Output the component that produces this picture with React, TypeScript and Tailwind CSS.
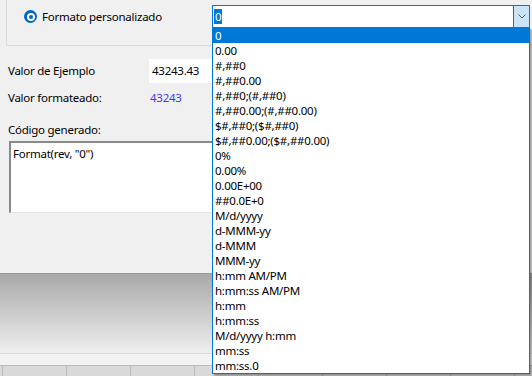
const FORMATS = [
  "0",
  "0.00",
  "#,##0",
  "#,##0.00",
  "#,##0;(#,##0)",
  "#,##0.00;(#,##0.00)",
  "$#,##0;($#,##0)",
  "$#,##0.00;($#,##0.00)",
  "0%",
  "0.00%",
  "0.00E+00",
  "##0.0E+0",
  "M/d/yyyy",
  "d-MMM-yy",
  "d-MMM",
  "MMM-yy",
  "h:mm AM/PM",
  "h:mm:ss AM/PM",
  "h:mm",
  "h:mm:ss",
  "M/d/yyyy h:mm",
  "mm:ss",
  "mm:ss.0",
];

const SELECTED = "0";

function Radio() {
  return (
    <span className="flex h-[13px] w-[13px] shrink-0 items-center justify-center rounded-full bg-[#0067c0]">
      <span className="flex h-[8px] w-[8px] items-center justify-center rounded-full bg-white">
        <span className="h-[4px] w-[4px] rounded-full bg-[#0067c0]" />
      </span>
    </span>
  );
}

function ComboBox() {
  return (
    <div className="flex h-[23px] w-[318px] border border-[#0078d7] bg-white">
      <div className="flex flex-1 items-center pl-[1px]">
        <span className="bg-[#0078d7] px-[1px] leading-[15px] text-white">{SELECTED}</span>
      </div>
      <div className="flex w-[16px] items-center justify-center border-l border-[#0078d7] bg-[#cce4f7]">
        <svg width="8" height="5" viewBox="0 0 8 5" fill="none">
          <path d="M0.5 0.5 L4 4 L7.5 0.5" stroke="#5a5a5a" strokeWidth="1" />
        </svg>
      </div>
    </div>
  );
}

function DropdownList() {
  return (
    <div className="absolute left-[212px] top-[27px] w-[318px] border border-[#0078d7] bg-white shadow-[2px_2px_2px_rgba(0,0,0,0.35)]">
      {FORMATS.map((f) => (
        <div
          key={f}
          className={
            f === SELECTED
              ? "h-[15px] overflow-hidden bg-[#0078d7] pl-[2px] leading-[15px] text-white"
              : "h-[15px] overflow-hidden pl-[2px] leading-[15px] text-black"
          }
        >
          {f}
        </div>
      ))}
    </div>
  );
}

export default function App() {
  return (
    <div className="relative flex h-[376px] w-[532px] flex-col overflow-hidden bg-[#f0f0f0] font-['Noto_Sans',sans-serif] text-[11.5px] tracking-[-0.25px] text-black">
      <div className="flex h-[273px] shrink-0 flex-col">
        <div className="ml-[6px] flex h-[46px] shrink-0 items-start border-b border-l border-[#dcdcdc] pt-[5px]">
          <div className="flex h-[23px] w-[205px] items-center gap-[5px] pl-[17px]">
            <Radio />
            <span>Formato personalizado</span>
          </div>
          <ComboBox />
        </div>

        <div className="mt-[13px] flex h-[24px] items-center">
          <span className="w-[149px] pl-[8px]">Valor de Ejemplo</span>
          <div className="flex h-[24px] w-[63px] items-center bg-white pl-[3px]">43243.43</div>
        </div>

        <div className="mt-[5px] flex h-[20px] items-center">
          <span className="w-[150px] pl-[8px]">Valor formateado:</span>
          <span className="text-[#3b3bf2]">43243</span>
        </div>

        <div className="mt-[12px] flex h-[20px] items-center pl-[8px]">Código generado:</div>

        <div className="ml-[9px] mt-[1px] h-[72px] w-[203px] border-b border-l-2 border-t-2 border-b-[#e3e3e3] border-l-[#8a8a8a] border-t-[#8a8a8a] bg-white pl-[2px] pt-[2px]">
          Format(rev, "0")
        </div>
      </div>

      <div className="h-[1px] shrink-0 bg-[#9a9a9a]" />
      <div className="h-[79px] shrink-0 bg-gradient-to-b from-[#a9a9a9] to-[#efefef]" />
      <div className="h-[1px] shrink-0 bg-[#dadada]" />
      <div className="h-[11px] shrink-0 bg-[#f3f3f3]" />
      <div className="h-[1px] shrink-0 bg-[#bdbdbd]" />
      <div className="flex flex-1 bg-[#d9d9d9]">
        <div className="w-[3px] border-r border-[#bcbcbc]" />
        {[0, 1, 2, 3, 4, 5, 6, 7].map((i) => (
          <div key={i} className="w-[64px] shrink-0 border-r border-[#bcbcbc]" />
        ))}
      </div>

      <DropdownList />
    </div>
  );
}
